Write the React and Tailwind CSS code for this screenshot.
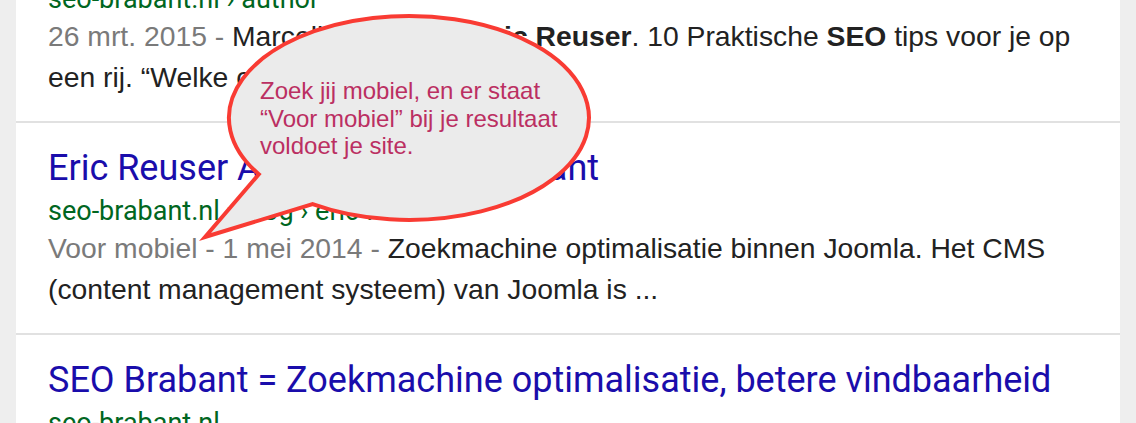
import React from "react";

function Card({ title, url, children }) {
  return (
    <div className="bg-white pl-[32px] pr-[16px] pt-[21px] pb-[23px]">
      <div className="text-[36px] leading-[48px] text-[#1a0dab] whitespace-nowrap font-['Roboto',sans-serif]">
        {title}
      </div>
      <div className="text-[27px] leading-[38px] text-[#006621] whitespace-nowrap font-['Roboto',sans-serif]">
        {url}
      </div>
      <div className="mt-[-2px] text-[28.3px] leading-[41px] text-[#222222] font-['Liberation_Sans',Arial,sans-serif]">
        {children}
      </div>
    </div>
  );
}

function Bubble() {
  return (
    <>
      <svg
        className="absolute left-0 top-0 pointer-events-none"
        width="1136"
        height="423"
        viewBox="0 0 1136 423"
      >
        <path
          d="M 312.6 204.1 A 180 102 0 1 0 258.8 174.2 L 205 237 Z"
          fill="#ebebeb"
          stroke="#f93b33"
          strokeWidth="4"
          strokeLinejoin="miter"
        />
      </svg>
      <div className="absolute left-[260px] top-[77px] text-[24px] leading-[27.5px] text-[#bb2f62] whitespace-nowrap font-['Liberation_Sans',Arial,sans-serif]">
        Zoek jij mobiel, en er staat
        <br />
        “Voor mobiel” bij je resultaat
        <br />
        voldoet je site.
      </div>
    </>
  );
}

export default function App() {
  return (
    <div className="relative h-[423px] w-[1136px] overflow-hidden bg-[#eeeeee]">
      <div className="mx-[16px] mt-[-89px] flex flex-col gap-[2px] bg-[#e1e1e1]">
        <Card title="Eric Reuser, auteur op SEO Brabant" url="seo-brabant.nl › author">
          <span className="whitespace-nowrap">
            <span className="text-[#7a7a7a]">26 mrt. 2015 - </span>
            Marcella interviewt <b>Eric Reuser</b>. 10 Praktische <b>SEO</b> tips voor je op
          </span>
          <br />
          <span className="whitespace-nowrap">een rij. “Welke content werkt ...</span>
        </Card>
        <Card title="Eric Reuser Auteur bij SEO Brabant" url="seo-brabant.nl › blog › eric-reuser">
          <span className="whitespace-nowrap">
            <span className="text-[#7a7a7a]">Voor mobiel - 1 mei 2014 - </span>
            Zoekmachine optimalisatie binnen Joomla. Het CMS
          </span>
          <br />
          <span className="whitespace-nowrap">(content management systeem) van Joomla is ...</span>
        </Card>
        <Card
          title="SEO Brabant = Zoekmachine optimalisatie, betere vindbaarheid"
          url="seo-brabant.nl"
        >
          <span className="whitespace-nowrap">
            <span className="text-[#7a7a7a]">Voor mobiel - </span>
            SEO Brabant helpt je met zoekmachine optimalisatie.
          </span>
        </Card>
      </div>
      <Bubble />
    </div>
  );
}
